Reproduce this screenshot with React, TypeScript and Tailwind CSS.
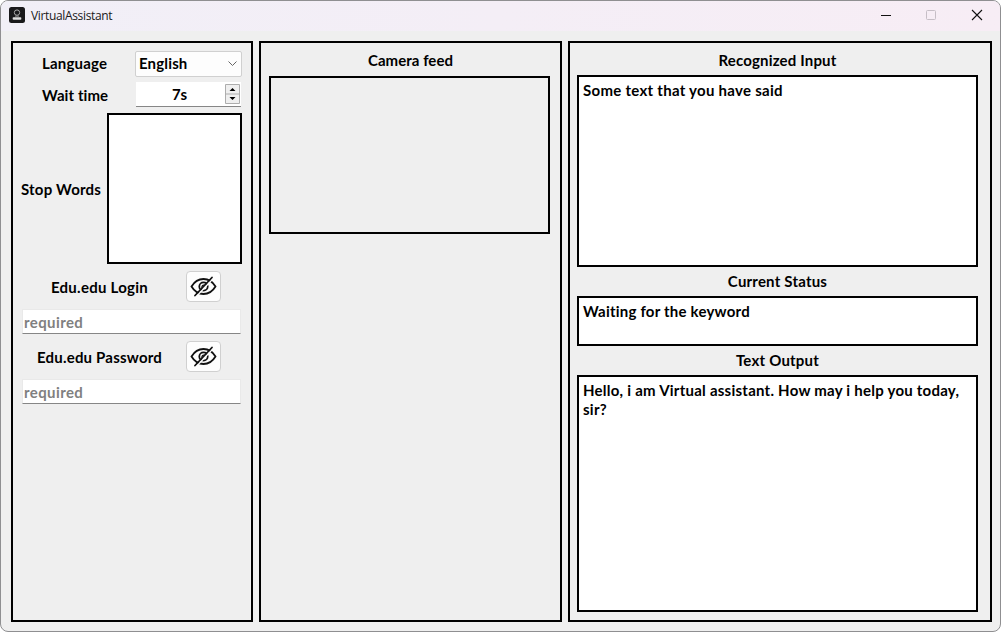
import type { ReactNode } from "react";

const bold = "font-['Lato','Noto_Sans',sans-serif] font-bold text-[15px] leading-[19px] whitespace-nowrap";

function Label({ children, className }: { children: ReactNode; className: string }) {
  return <div className={`${bold} ${className}`}>{children}</div>;
}

function HiddenEye() {
  return (
    <svg width="27" height="23" viewBox="0 0 27 23" fill="none" stroke="#111" strokeWidth="1.8" strokeLinecap="round">
      <path d="M1.5 11.5C4.5 6.5 8.5 4 13.5 4s9 2.500 12 7.500C22.500 16.500 18.500 19 13.500 19s-9-2.500-12-7.500Z" />
      <circle cx="13.500" cy="11.500" r="4.200" />
      <path d="M12.200 12.800a1.800 1.800 0 0 1 2.400-2.500" strokeWidth="1.300" />
      <path d="M6.300 21.500 23.200 3.500" stroke="#fdfdfd" strokeWidth="1.400" />
      <path d="M5 20.500 22 2.500" />
    </svg>
  );
}

function Credential({ title, className }: { title: string; className: string }) {
  return (
    <div className="w-[220px]">
      <div className="flex h-[31px] items-center">
        <Label className={`w-[165px] pt-px ${className}`}>{title}</Label>
        <button className="flex h-[31px] w-[35px] items-center justify-center rounded-[4px] border border-[#d0d0d0] bg-[#fdfdfd]">
          <HiddenEye />
        </button>
      </div>
      <div className="mt-[7px] ml-px flex h-[25px] w-[219px] items-center border border-[#e9e9e9] border-b-[#868686] bg-white pl-px">
        <Label className="pt-px tracking-[0.4px] text-[#808080]">required</Label>
      </div>
    </div>
  );
}

export default function App() {
  return (
    <div className="h-[632px] w-[1001px] overflow-hidden bg-white text-black">
      <div className="flex h-full w-full flex-col overflow-hidden rounded-[8px] border border-[#8f8f91] bg-[#efefef]">
        <header className="flex h-[30px] shrink-0 items-center bg-linear-to-r from-[#f1eff7] to-[#f7edf5] pl-[8px]">
          <svg width="16" height="16" viewBox="0 0 16 16" className="mb-[2px]">
            <rect width="16" height="16" rx="2.500" fill="#19191b" />
            <circle cx="8" cy="5.600" r="2.700" fill="none" stroke="#a9a9a9" />
            <path d="M7 8.500v1.500M9 8.500v1.500" stroke="#a9a9a9" />
            <rect x="3.700" y="10.200" width="8.600" height="2.500" rx=".8" fill="#dedede" />
          </svg>
          <span className="ml-[6px] font-['Open_Sans','Noto_Sans',sans-serif] text-[12px] leading-4 tracking-[-0.35px] text-[#191919]">VirtualAssistant</span>
          <svg width="110" height="20" viewBox="0 0 110 20" fill="none" className="mr-[11px] ml-auto">
            <path d="M2 9.500h10" stroke="#111" />
            <rect x="47.500" y="4.500" width="9" height="9" rx="1" stroke="#c6bec6" />
            <path d="M93 4l10 10M103 4L93 14" stroke="#111" strokeWidth="1.100" />
          </svg>
        </header>
        <main className="flex flex-1 gap-[6px] pt-[10px] pr-[8px] pb-[9px] pl-[10px]">
          <section className="flex w-[242px] flex-col border-2 border-black pt-[8px] pl-[8px]">
            <div className="flex h-[26px] items-center">
              <Label className="w-[114px] pb-px pl-[21px] tracking-[0.18px]">Language</Label>
              <div className="flex h-[26px] w-[107px] items-center justify-between rounded-[2px] border border-[#d0d0d0] bg-[#fdfdfd] pr-[4px] pl-[3px]">
                <Label className="pb-px tracking-[0.15px]">English</Label>
                <svg width="9" height="6" viewBox="0 0 9 6" fill="none" stroke="#666">
                  <path d="M.5.500l4 4 4-4" />
                </svg>
              </div>
            </div>
            <div className="mt-[5px] flex h-[25px] items-center">
              <Label className="w-[115px] pt-px pl-[21px] tracking-[0.08px]">Wait time</Label>
              <div className="flex h-[25px] w-[105px] items-center border-b border-[#868686] bg-white">
                <Label className="w-[87px] pt-px text-center tracking-[-0.2px]">7s</Label>
                <svg width="15" height="20" viewBox="0 0 15 20" className="ml-[2px]">
                  <path d="M.5.500h14v19H.5zM.5 10h14" fill="#efefef" stroke="#adadad" />
                  <path d="M4.500 7h6l-3-3zM4.500 13h6l-3 3z" fill="#000" />
                </svg>
              </div>
            </div>
            <div className="mt-[6px] flex h-[151px] items-center">
              <Label className="w-[86px] pt-px tracking-[0.2px]">Stop Words</Label>
              <div className="h-[151px] w-[135px] border-2 border-black bg-white" />
            </div>
            <div className="mt-[7px] flex flex-col gap-[7px]">
              <Credential title="Edu.edu Login" className="pl-[30px] tracking-[0.25px]" />
              <Credential title="Edu.edu Password" className="pl-[16px] tracking-[0.2px]" />
            </div>
          </section>
          <section className="w-[303px] border-2 border-black px-[8px] pt-[8px]">
            <Label className="text-center tracking-[0.05px]">Camera feed</Label>
            <div className="mt-[6px] h-[158px] w-[281px] border-2 border-black" />
          </section>
          <section className="w-[424px] border-2 border-black pt-[8px] pl-[7px]">
            <div className="w-[401px]">
              <Label className="text-center tracking-[0.17px]">Recognized Input</Label>
              <div className="mt-[5px] h-[192px] border-2 border-black bg-white px-[4px] pt-[4px]">
                <Label className="tracking-[0.28px]">Some text that you have said</Label>
              </div>
              <Label className="mt-[5px] text-center tracking-[0.2px]">Current Status</Label>
              <div className="mt-[5px] h-[50px] border-2 border-black bg-white px-[4px] pt-[4px]">
                <Label className="tracking-[0.22px]">Waiting for the keyword</Label>
              </div>
              <Label className="mt-[5px] text-center tracking-[0.22px]">Text Output</Label>
              <div className="mt-[5px] h-[237px] border-2 border-black bg-white px-[4px] pt-[4px]">
                <Label className="tracking-[0.24px]">
                  Hello, i am Virtual assistant. How may i help you today,
                  <br />
                  sir?
                </Label>
              </div>
            </div>
          </section>
        </main>
      </div>
    </div>
  );
}
